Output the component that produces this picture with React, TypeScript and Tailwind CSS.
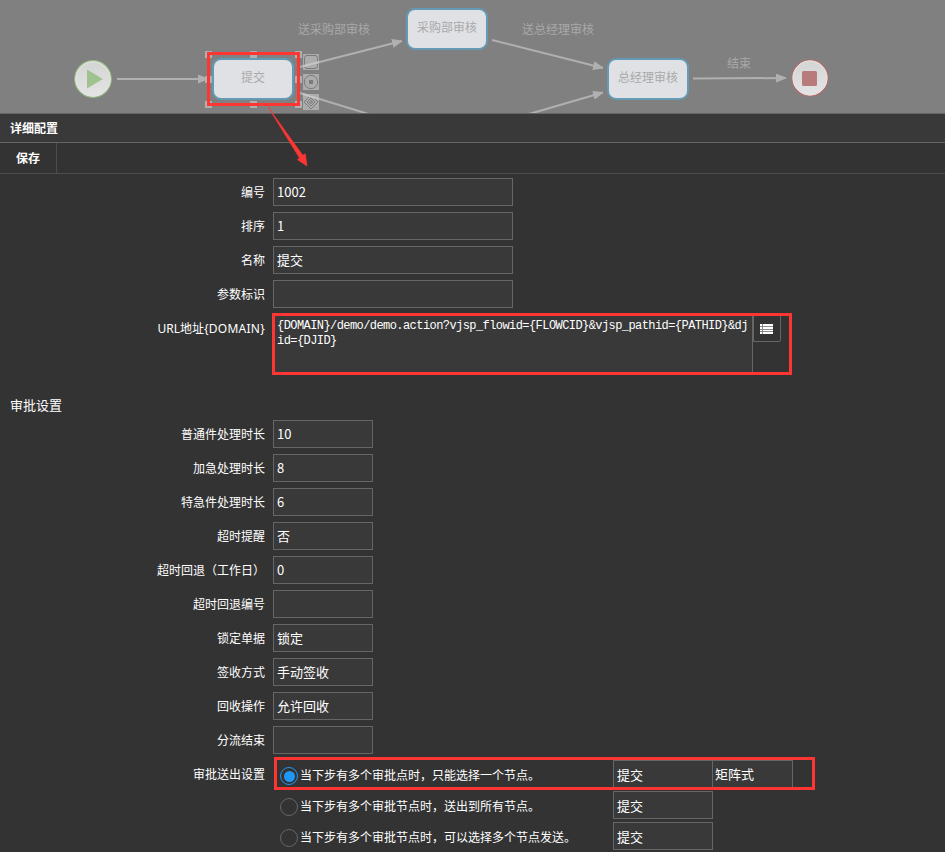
import React from 'react';

interface Field {
  label: string;
  value: string;
}

const baseFields: Field[] = [
  { label: '编号', value: '1002' },
  { label: '排序', value: '1' },
  { label: '名称', value: '提交' },
  { label: '参数标识', value: '' },
];

const approvalFields: Field[] = [
  { label: '普通件处理时长', value: '10' },
  { label: '加急处理时长', value: '8' },
  { label: '特急件处理时长', value: '6' },
  { label: '超时提醒', value: '否' },
  { label: '超时回退（工作日）', value: '0' },
  { label: '超时回退编号', value: '' },
  { label: '锁定单据', value: '锁定' },
  { label: '签收方式', value: '手动签收' },
  { label: '回收操作', value: '允许回收' },
  { label: '分流结束', value: '' },
];

const sendOptions = [
  { text: '当下步有多个审批点时，只能选择一个节点。', action: '提交', mode: '矩阵式' },
  { text: '当下步有多个审批节点时，送出到所有节点。', action: '提交' },
  { text: '当下步有多个审批节点时，可以选择多个节点发送。', action: '提交' },
];

const FlowCanvas: React.FC = () => (
  <div className="relative h-[113px] shrink-0 overflow-hidden bg-[#808080] text-[12px] leading-[18px] text-[#a9a9a9]">
    <svg className="absolute left-0 top-0" width="945" height="113" fill="none">
      <defs>
        <marker id="head" viewBox="0 0 9 8" refX="9" refY="4" markerWidth="10" markerHeight="9" preserveAspectRatio="none" markerUnits="userSpaceOnUse" orient="auto">
          <path d="M0 0 L9 3.6 V4.4 L0 8 Z" fill="#b0b0b0" />
        </marker>
        <linearGradient id="disc" x1="0" y1="0" x2="0" y2="1">
          <stop offset="0" stopColor="#d3d5d3" />
          <stop offset="1" stopColor="#e4e4e4" />
        </linearGradient>
      </defs>

      {/* start and end */}
      <circle cx="93" cy="79" r="18.3" fill="url(#disc)" stroke="#93b97e" strokeWidth="1.2" />
      <circle cx="93" cy="79" r="17.2" stroke="#e6e6e6" />
      <path d="M87 69.5 L102.8 79 L87 88.5 Z" fill="#9fc28e" />
      <circle cx="810" cy="78" r="18" fill="url(#disc)" stroke="#b96a6a" strokeWidth="1.2" />
      <circle cx="810" cy="78" r="17" stroke="#e6e6e6" />
      <rect x="802" y="71" width="15" height="15" rx="1.5" fill="#b77b7b" />

      {/* quick tools beside the selected node */}
      <g fill="#acacac">
        <rect x="303" y="54" width="16" height="16" />
        <rect x="303" y="74" width="16" height="16" />
        <rect x="303" y="94" width="16" height="16" />
      </g>
      <g stroke="#7b7b7b">
        <rect x="304.5" y="55.5" width="13" height="13" rx="2.5" />
        <circle cx="311" cy="82" r="6.7" />
        <path d="M311 95 L318 102 L311 109 L304 102 Z" />
        <path d="M311 98 L315 102 L311 106 L307 102 Z" />
        <circle cx="311" cy="102" r="1.3" />
      </g>
      <rect x="309" y="80" width="4" height="4" fill="#7b7b7b" />

      <g stroke="#b0b0b0" strokeWidth="2">
        <path d="M117 79 H208" markerEnd="url(#head)" />
        <path d="M300 67 L402 41" markerEnd="url(#head)" />
        <path d="M300 93 L370 114.5" />
        <path d="M492 40 L603 68" markerEnd="url(#head)" />
        <path d="M529 114 L603 92.5" markerEnd="url(#head)" />
        <path d="M693 78.5 L786 78" markerEnd="url(#head)" />
      </g>
      <g stroke="#c6c6c6" strokeWidth="2">
        <path d="M303 66.2 L319 62.1" />
        <path d="M303 94 L319 98.9" />
      </g>
    </svg>

    <span className="absolute left-[298px] top-[21px]">送采购部审核</span>
    <span className="absolute left-[522px] top-[21px]">送总经理审核</span>
    <span className="absolute left-[727px] top-[55px]">结束</span>

    <div className="absolute left-[212px] top-[58px] flex h-[42px] w-[82px] items-center justify-center rounded-[9px] border-2 border-[#659ab5] bg-[#e0e1e5] pb-[2px]">
      提交
    </div>
    <div className="absolute left-[406px] top-[8px] flex h-[42px] w-[82px] items-center justify-center rounded-[9px] border-2 border-[#659ab5] bg-[#e0e1e5] pb-[2px]">
      采购部审核
    </div>
    <div className="absolute left-[607px] top-[58px] flex h-[42px] w-[82px] items-center justify-center rounded-[9px] border-2 border-[#659ab5] bg-[#e0e1e5] pb-[2px]">
      总经理审核
    </div>

    <svg className="absolute left-[205px] top-[51px]" width="97" height="57" fill="#b0b0b0">
      <path d="M0 0h7v7H0z M45 0h7v7h-7z M90 0h7v7h-7z M0 25h7v7H0z M90 25h7v7h-7z M0 50h7v7H0z M45 50h7v7h-7z M90 50h7v7h-7z" />
    </svg>
    <div className="absolute left-[207px] top-[52px] h-[54px] w-[93px] border-3 border-[#fd3634]" />
  </div>
);

const FieldRow: React.FC<Field & { wide?: boolean }> = ({ label, value, wide }) => (
  <div className="flex h-7 items-center gap-2">
    <label className="w-[265px] pt-[2px] text-right">{label}</label>
    <div
      className={
        wide
          ? "flex h-7 w-[240px] items-center border border-[#666] bg-[#393939] px-[3px] font-['Noto_Sans_CJK_SC',sans-serif] text-[13px]"
          : "flex h-7 w-[100px] items-center border border-[#666] bg-[#393939] px-[3px] pb-px font-['Noto_Sans_CJK_SC',sans-serif] text-[13px]"
      }
    >
      {value}
    </div>
  </div>
);

const App: React.FC = () => {
  return (
    <div className="relative flex h-[852px] w-[945px] flex-col overflow-hidden bg-[#333] font-['Noto_Sans','Noto_Sans_CJK_SC',sans-serif] text-[12px] leading-[18px] text-white">
      <FlowCanvas />

      <div className="flex h-[30px] shrink-0 items-center border-y border-[#666] bg-[#393939] px-[10px] pt-[2px] font-bold">
        详细配置
      </div>
      <div className="flex h-[31px] shrink-0 border-b border-[#4d4d4d]">
        <button className="flex w-[57px] items-center justify-center border-r border-[#4d4d4d] pt-[2px] font-bold">保存</button>
      </div>

      <div className="flex flex-col gap-[6px] pt-1">
        {baseFields.map((f) => (
          <FieldRow key={f.label} {...f} wide />
        ))}

        <div className="flex h-[60px] gap-2">
          <label className="w-[265px] pt-[6px] text-right">
            URL地址<span className="tracking-[0.25px]">{'{DOMAIN}'}</span>
          </label>
          <div className="relative flex items-start">
            <div className="h-[60px] w-[480px] break-all border border-[#666] bg-[#393939] px-[3px] pt-[4px] font-['Liberation_Mono',monospace] text-[12px] leading-[15px] tracking-[-0.57px]">
              {'{DOMAIN}/demo/demo.action?vjsp_flowid={FLOWCID}&vjsp_pathid={PATHID}&djid={DJID}'}
            </div>
            <button className="flex h-7 w-7 items-center justify-center rounded-br-[2px] border border-[#666]">
              <svg width="14" height="10" fill="#fff" className="mt-[2px]" shapeRendering="crispEdges">
                <path d="M0 0h13v10H0z" fill="#8a8a8a" />
                <path d="M0 0h2v2H0z M3 0h10v2H3z M0 3h2v2H0z M3 3h10v2H3z M0 6h2v1H0z M3 6h10v1H3z M0 8h2v2H0z M3 8h10v2H3z" />
              </svg>
            </button>
            <div className="absolute -left-px -top-px h-[62px] w-[520px] border-3 border-[#fd3634]" />
          </div>
        </div>
      </div>

      <h2 className="mt-[22px] px-[10px] text-[13px] leading-[18px]">审批设置</h2>

      <div className="mt-[6px] flex flex-col gap-[6px]">
        {approvalFields.map((f) => (
          <FieldRow key={f.label} {...f} />
        ))}

        <div className="flex gap-2">
          <label className="w-[265px] pt-[6px] text-right">审批送出设置</label>
          <div className="relative flex flex-col gap-[3px]">
            {sendOptions.map((o, i) => (
              <div key={o.text} className="flex h-7 items-center pl-[7px]">
                {i === 0 ? (
                  <span className="mt-[4px] flex size-[18px] items-center justify-center rounded-full border border-[#2196f3]">
                    <span className="size-[11px] rounded-full bg-[#2196f3]" />
                  </span>
                ) : (
                  <span className="mt-[4px] size-[18px] rounded-full border border-[#666]" />
                )}
                <span className="w-[315px] pl-[2px] pt-[4px]">{o.text}</span>
                <span className="flex h-7 w-[100px] items-center border border-[#666] bg-[#393939] px-[3px] pt-px text-[13px]">
                  {o.action}
                </span>
                {o.mode && (
                  <span className="-ml-px flex h-7 w-[81px] items-center border border-[#666] bg-[#393939] px-[2px] pb-px text-[13px]">
                    {o.mode}
                  </span>
                )}
              </div>
            ))}
            <div className="absolute left-px -top-[3px] h-[33px] w-[541px] border-3 border-[#fd3634]" />
          </div>
        </div>
      </div>

      {/* arrow from the selected node to its settings */}
      <svg className="absolute left-[264px] top-[104px]" width="48" height="66" fill="#fd3634">
        <path d="M4 3 L38.8 51.3 L41.3 49.8 L43 62 L33.5 55.7 L35.5 54 Z" stroke="#fd3634" strokeWidth="0.6" />
      </svg>
    </div>
  );
};

export default App;
